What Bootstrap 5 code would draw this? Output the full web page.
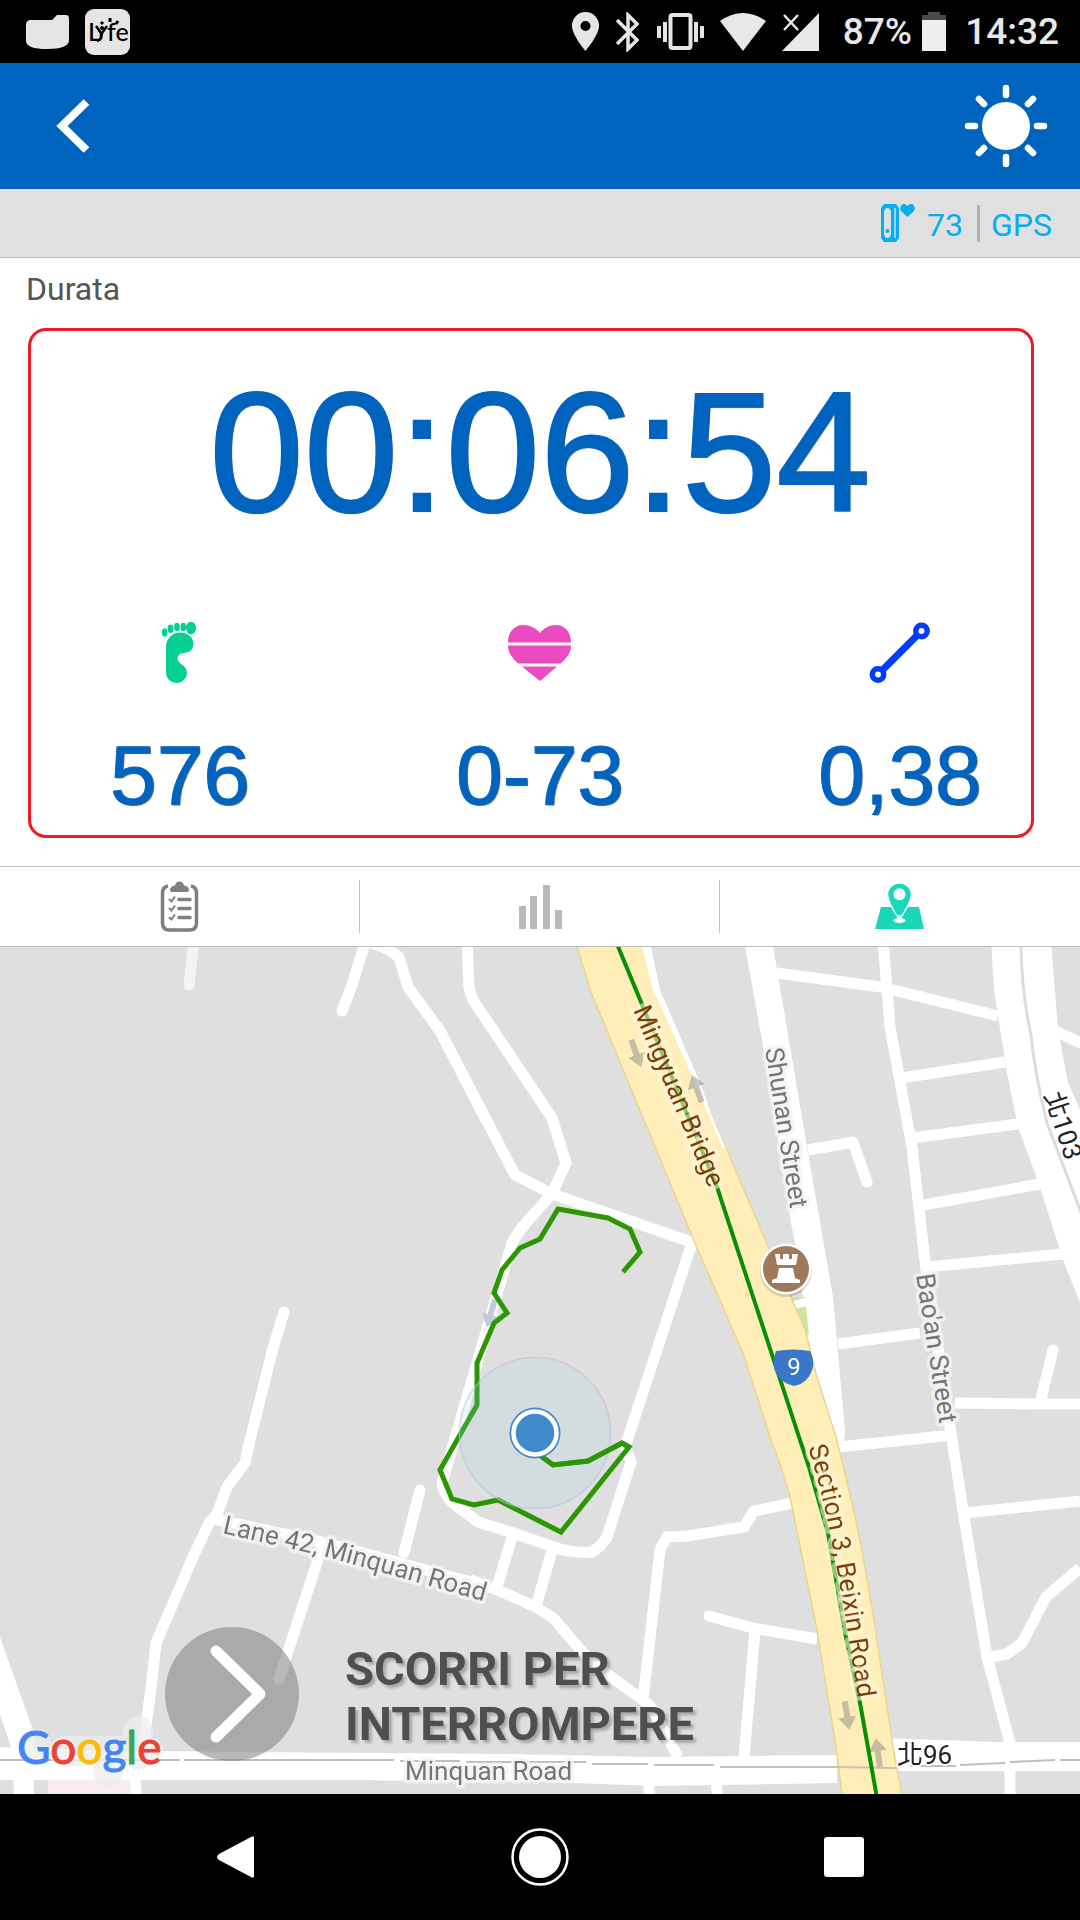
<!DOCTYPE html>
<html lang="it">
<head>
<meta charset="utf-8">
<meta name="viewport" content="width=device-width, initial-scale=1">
<title>Allenamento</title>
<link rel="stylesheet" href="https://cdn.jsdelivr.net/npm/bootstrap@5.3.0/dist/css/bootstrap.min.css">
<style>
  body { font-family: Roboto, "Noto Sans CJK TC", sans-serif; background: #fff; }
  svg { display: block; flex: none; }
  .status-bar { height: 63px; padding: 0 21px 0 26px; color: #e8e8e8; font-size: 37px; font-weight: 500; line-height: 65px; }
  .status-icons { gap: 16px; }
  .battery { margin: 0 19px 0 10px; }
  .app-bar { height: 126px; background: #0064bf; padding: 0 32px 0 44px; }
  .icon-btn { background: none; border: 0; padding: 0; color: inherit; }
  .sensor-bar { height: 69px; background: #e0e0e0; border-bottom: 1px solid #bdbdbd; padding: 0 28px; color: #03aef3; font-size: 32px; line-height: 36px; }
  .sensor-bar span { padding-top: 3px; }
  .sensor-bar svg { margin-right: 12px; }
  .sensor-bar .divider { width: 3px; height: 37px; background: #b2b2b2; margin: 0 11px 0 14px; }
  .metrics { padding: 13px 0 49px; }
  .metrics h1 { font-size: 32px; line-height: 36px; font-weight: 400; color: #555; padding-left: 26px; margin: 0 0 60px; }
  .reading { font-family: "Liberation Sans", Arial, sans-serif; color: #0064bf; text-shadow: 1px 1px 1px rgba(0,0,0,.6); text-align: center; margin: 0; }
  .clock-time { font-size: 170px; line-height: 170px; -webkit-text-stroke: 2px #0064bf; }
  .stat-value { font-size: 84px; line-height: 84px; margin-top: 45px; -webkit-text-stroke: 1px #0064bf; }
  .stats { margin-top: 79px; }
  .highlight-frame { inset: 70px 46px 28px 28px; border: 3px solid #ed1c24; border-radius: 18px; pointer-events: none; }
  .view-tabs { height: 81px; border-top: 1px solid #bdbdbd; border-bottom: 1px solid #bdbdbd; }
  .view-tabs a + a::before { content: ""; position: absolute; left: -1px; top: 13px; bottom: 13px; width: 1px; background: #c4c4c4; }
  .map-area { min-height: 600px; background: #dfdfdf; }
  .map-canvas { position: absolute; inset: 0; width: 100%; height: 100%; }
  .stop-slider { padding: 0 0 33px 165px; gap: 46px; }
  .stop-text { font-size: 47px; line-height: 55px; font-weight: 700; color: #4f4f4f; text-shadow: 3px 3px 3px rgba(0,0,0,.25); width: 400px; padding-top: 4px; }
  .nav-keys { height: 126px; gap: 184px; }
  .nav-keys button { width: 120px; }
  .lbl { font-family: Roboto, "Noto Sans CJK TC", sans-serif; font-size: 26px; fill: #757575; stroke: #f3f3f3; stroke-opacity: .85; stroke-width: 7; stroke-linejoin: round; paint-order: stroke; }
  .lbl-main { fill: #7c3c05; stroke: #fff6dc; stroke-opacity: .55; stroke-width: 9; }
  .lbl-num { fill: #222; stroke: #fff; stroke-width: 4; }
  .g-logo { font-family: Lato, sans-serif; font-size: 46px; stroke-width: 1; }
</style>
</head>
<body>
<div class="d-flex flex-column min-vh-100">

  <div class="status-bar bg-black d-flex align-items-center justify-content-between">
    <div class="d-flex align-items-center gap-3">
      <svg width="43" height="36" viewBox="0 0 43 36"><path fill="#e5e5e5" d="M5 6h21l5-5h9q3 0 3 4v21q0 9-22 9T0 26V11q0-5 5-5z"/></svg>
      <svg width="45" height="46" viewBox="0 0 45 46"><rect width="45" height="46" rx="9" fill="#e5e5e5"/><text x="3" y="32" font-family="Lato, sans-serif" font-size="25" fill="#000">L</text><text x="22" y="32" font-family="Lato, sans-serif" font-size="25" fill="#000">fe</text><circle cx="17" cy="19" r="2"/><path d="M11 17l5 7v3q0 4-4 5M22 17l-5 7-1 6" stroke="#000" stroke-width="2.500" fill="none"/><path d="M16 13l2 2M25 9v4M33 12l-2 3" stroke="#000" stroke-width="3" fill="none"/></svg>
    </div>
    <div class="d-flex align-items-center">
      <div class="d-flex align-items-center status-icons">
        <svg width="27" height="39" viewBox="0 0 27 39"><path fill="#e5e5e5" fill-rule="evenodd" d="M13.500 0A13.500 13.500 0 0 0 0 14c0 9 13.500 25 13.500 25S27 23 27 14A13.500 13.500 0 0 0 13.500 0zm0 9a5 5 0 1 1 0 10 5 5 0 0 1 0-10z"/></svg>
        <svg width="26" height="40" viewBox="0 0 26 40"><path d="M2 8l20 20-9 9V3l9 9L2 32" fill="none" stroke="#e5e5e5" stroke-width="3.500"/></svg>
        <svg width="47" height="38" viewBox="0 0 47 38"><rect x="13.500" y="2" width="20" height="33" rx="2" fill="none" stroke="#e5e5e5" stroke-width="4"/><path d="M2 13v12M8 9v20M39 9v20M45 13v12" stroke="#e5e5e5" stroke-width="4"/></svg>
        <svg width="46" height="38" viewBox="0 0 46 38"><path fill="#e8e8e8" d="M0 8Q23-8 46 8L23 38z"/></svg>
        <svg width="37" height="38" viewBox="0 0 37 38"><path fill="#e8e8e8" d="M37 0v38H0z"/><path d="M2 2l14 15M16 2L2 17" stroke="#e8e8e8" stroke-width="2.500"/></svg>
      </div>
      <span class="ms-4">87%</span>
      <svg class="battery" width="24" height="40" viewBox="0 0 24 40"><path fill="#4a4a4a" d="M0 3h6V0h12v3h6v5H0z"/><path fill="#eee" d="M0 8h24v31H0z"/></svg>
      <span>14:32</span>
    </div>
  </div>

  <header class="app-bar d-flex align-items-center justify-content-between text-white">
    <button class="icon-btn" type="button" aria-label="Indietro"><svg width="60" height="60" viewBox="0 0 60 60"><path d="M42.500 6L18 30l24.500 24" fill="none" stroke="#fff" stroke-width="8"/></svg></button>
    <button class="icon-btn" type="button" aria-label="Schermo sempre acceso"><svg width="84" height="84" viewBox="-42 -42 84 84"><circle r="24" fill="#fff"/><path d="M0-38v7M0 38v-7M-38 0h7M38 0h-7M-27-27l5 5M27-27l-5 5M-27 27l5-5M27 27l-5-5" stroke="#fff" stroke-width="6.500" stroke-linecap="round"/></svg></button>
  </header>

  <div class="sensor-bar d-flex align-items-center justify-content-end">
    <svg width="34" height="38" viewBox="0 0 34 38"><path fill="#03aef3" fill-rule="evenodd" d="M3 0h12l3 4v30l-3 4H3l-3-4V4zm3.500 4Q3 4 3 9v20q0 5 3.500 5T10 29V9q0-5-3.500-5z"/><path d="M14 4v30" stroke="#bfe6f5" stroke-width="1.500"/><circle cx="6.500" cy="27" r="2" fill="#03aef3"/><path fill="#03aef3" d="M26.500 13L20 7q-2-4 1-6.500 3-1.500 5.500 1.500Q29-1 32 .5q3 2.500 1 6.500z"/></svg>
    <span>73</span><span class="divider"></span><span>GPS</span>
  </div>

  <section class="metrics position-relative">
    <h1>Durata</h1>
    <p class="reading clock-time">00:06:54</p>
    <div class="row g-0 stats">
      <div class="col-4">
        <svg class="mx-auto" width="72" height="72" viewBox="144 616 72 72"><g fill="#04d094"><ellipse cx="191" cy="628" rx="5" ry="6.300"/><ellipse cx="183.300" cy="627" rx="2.800" ry="4.300"/><ellipse cx="177" cy="627" rx="2.900" ry="4.300"/><ellipse cx="170.500" cy="628.800" rx="2.900" ry="4.200"/><ellipse cx="164.700" cy="632.500" rx="2.800" ry="4.200"/><path d="M166 645c1-8 8-12.500 14-12.500 9 0 13.500 6 13.500 11 0 6-4 9.500-10 9.500-4 0-6 3-6 6 0 5 9.500 5.500 9.500 14 0 5-5 10-10 10-6 0-11-4-11-11z"/></g></svg>
        <p class="reading stat-value">576</p>
      </div>
      <div class="col-4">
        <svg class="mx-auto" width="72" height="72" viewBox="504 616 72 72"><path fill="#ec4bc0" d="M508 642.500c0-10 6-17.500 15-17.500 7 0 13 3 17 8 4-5 9-8 16-8 9 0 15 7.500 15 17.500zM508 645.500h63c0 7-4 12-10 18h-43c-6-6-10-11-10-18zM522 666.500h35L540 681z"/></svg>
        <p class="reading stat-value">0-73</p>
      </div>
      <div class="col-4">
        <svg class="mx-auto" width="72" height="72" viewBox="864 616 72 72"><g fill="none" stroke="#003cff" stroke-width="5.500"><circle cx="921.500" cy="631" r="5.700"/><circle cx="878" cy="674.500" r="5.700"/><path stroke-width="7" d="M882 670.500l35.500-35.500"/></g></svg>
        <p class="reading stat-value">0,38</p>
      </div>
    </div>
    <div class="highlight-frame position-absolute"></div>
  </section>

  <nav class="view-tabs row g-0">
    <a class="col-4 position-relative d-flex align-items-center justify-content-center" href="#riepilogo" aria-label="Riepilogo"><svg width="40" height="52" viewBox="160 881 40 52"><path fill="#7f7f7f" d="M170 890q0-4 5-4.500 1-4 4.500-4t4.500 4q5 .5 5 4.500 0 2-3 2h-13q-3 0-3-2z"/><path d="M168 886q-5.500 1-5.500 7v30q0 7 7 7h20q7 0 7-7v-30q0-6-5.500-7" fill="none" stroke="#7f7f7f" stroke-width="3.500"/><path d="M179 899.500h11M179 908.500h11M179 917.500h11" stroke="#7f7f7f" stroke-width="3.500" stroke-linecap="round"/><path d="M169 899l2.500 2.500 3.500-5M169 908l2.500 2.500 3.500-5M169 917l2.500 2.500 3.500-5" fill="none" stroke="#7f7f7f" stroke-width="2"/></svg></a>
    <a class="col-4 position-relative d-flex align-items-center justify-content-center" href="#grafici" aria-label="Grafici"><svg width="44" height="46" viewBox="0 0 44 46"><path fill="#bababa" d="M1 22h7v23H1zM12 12h7v33h-7zM25 1h7v44h-7zM37 26h7v19h-7z"/></svg></a>
    <a class="col-4 position-relative d-flex align-items-center justify-content-center" href="#mappa" aria-label="Mappa"><svg width="50" height="50" viewBox="875 882 50 50"><path fill="#18d8b9" d="M881 907h38l5 22h-49z"/><path fill="#18d8b9" stroke="#fff" stroke-width="1.500" fill-rule="evenodd" d="M899.500 883c-6.500 0-12 5-12 11.500 0 8 12 25 12 25s12-17 12-25c0-6.500-5.500-11.500-12-11.500zm0 6a5.300 5.300 0 1 1 0 10.600 5.300 5.300 0 0 1 0-10.600z"/><path d="M899.500 915v5" stroke="#fff" stroke-width="2"/><ellipse cx="899.500" cy="920.500" rx="6" ry="2.500" fill="#fff"/></svg></a>
  </nav>

  <main class="map-area position-relative flex-grow-1 overflow-hidden">
    <svg class="map-canvas" viewBox="0 947 1080 847" preserveAspectRatio="xMidYMid slice" role="img" aria-label="Mappa del percorso">
      <defs>
        <path id="p-lane" d="M222 1533L322 1556Q340 1560 500 1606"/>
        <path id="p-sec" d="M808 1448Q820 1482 832 1543T860 1712"/>
        <g id="arr"><path d="M-3-14h6V2h6L0 15-9 2h6z"/></g>
      </defs>
      <rect y="947" width="1080" height="847" fill="#dfdfdf"/>
      <path fill="#f9ecef" d="M48 1780h84v14H48z"/>
      <!-- local streets -->
      <path d="M194 940l-5 45" stroke="#f4f4f4" stroke-width="11" stroke-linecap="round"/>
      <g fill="none" stroke="#fff" stroke-width="11">
        <path stroke-linecap="round" d="M366 940l-14 45-10 26M366 941l22 8 11 8 9 30 32 44 46 89M284 1312l-11 36-23 92M420 1490l-16 63M321 1550l-42 129M709 1616l44 12M853 1142l14 40M1053 1350l-13 53"/>
        <path d="M440 1031l75 144 37 19 145 50M467 940l2 47q2 12 10 22l73 109 14 45-14 31-19 21q-12 12-21 28l-70 240q2 14 16 24t20 15l32 10 50 17q12 4 32 3 10-6 15-15l24-75-6-15 67-204"/>
        <path d="M250 1440l-5 23-18 24-11 30-6 4-17 36-37 86-4 37-7 53-2 35M209 1518l113 24M470 1580l23 8 43 19 18 12 38 44 48 35q10 6 14 14l24 45M512 1537l-15 50M553 1547l-16 56M322 1542l171 46"/>
        <path d="M792 1503l-38 8-10 16-56 9-21 1-7 13-17 150M753 1628l64 11M755 1630l-11 127"/>
        <path d="M777 973l104 14 117 29M883 940l7 87 22 120 14 123 25 163 13 84 23 140 23 86v60M901 1078l104-16M912 1138l106-14M918 1206l122-22M927 1267l136-13M838 1344l82-11M808 1150l46-8M955 1403l82 1h43M838 1447l115-12M965 1513l115-12M991 1657l16-3 15-11 24-46 34-29M1055 1031l28 13M649 1780v20M716 1780l2 20"/>
      </g>
      <!-- wide streets -->
      <g fill="#fff">
        <path d="M0 1637l34 96v61H14l-3-47L0 1715z"/>
        <path d="M0 1747l145 4 360 3 150 3 182-2v28l-180 3-110-4-200-2H0zM885 1738l110 4h85v29H885zM130 1776h10l2 18h-11z"/>
        <path d="M744 940l20 111 27 172 5 24 8 56 5 50 6 34 22 60q8-2 8-16l-12-134-26-150-35-207z"/>
        <path d="M991 940l3 50 13 83 11 54 22 60 23 73 20 50v-194l-15-33-10-53-7-90z"/>
      </g>
      <path d="M1021 940q0 50 10 95 4 40 16 88l35 92" fill="none" stroke="#dcdcdc" stroke-width="3"/>
      <path d="M0 1760h180M184 1760h210M400 1761h60M466 1762h120M592 1764h56M654 1765h60M720 1767h80M910 1766h46M960 1765l45-2M1010 1762l45-2M1060 1760h20" stroke="#bfbfbf" stroke-width="2"/>
      <!-- park strip -->
      <path fill="#cbe6a3" d="M788 1297h17l8 76-10-3z"/><path d="M790 1306l16-4M803 1340l12-2" stroke="#fff" stroke-width="8"/>
      <!-- highway -->
      <path fill="#fff" d="M630 947h21l9 43 39 90 28 75v20z"/>
      <path fill="#ffeeb8" stroke="#ead48e" stroke-width="1.500" d="M575 940l16 52 106 256 46 105 28 87q12 30 19 57l27 133 19 117 7 54h60l-10-54-19-127-12-70q-10-50-26-113l-20-63-11-45-41-92-37-87-37-82-36-80-12-48z"/>
      <path d="M642 940l12 48 36 80 34 80" fill="none" stroke="#fff" stroke-width="3"/>
      <path d="M800 1767h36l60 1" fill="none" stroke="#c8c3b4" stroke-width="2"/>
      <g fill="#8a8a8a" opacity=".5">
        <use href="#arr" transform="translate(636 1053) rotate(-20)"/>
        <use href="#arr" transform="translate(697 1089) rotate(160)"/>
        <use href="#arr" transform="translate(847 1715) rotate(-9)"/>
        <use href="#arr" transform="translate(878 1753) rotate(172)"/>
      </g>
      <use href="#arr" fill="#c6c9dc" transform="translate(491 1313) rotate(16)"/>
      <path d="M617 944l24 58 76 185 83 253 9 27 19 66 18 104 14 66 17 95" fill="none" stroke="#078f06" stroke-width="4"/>
      <!-- GPS track -->
      <path d="M623 1272l17-20-10-23-22-11-50-9-18 30-20 9-18 22-8 23 13 20-13 10-17 40v42l-37 65 12 29 22 6 24-5 63 32 68-85-7-4-34 18-35 4-12-9" fill="none" stroke="#2a9703" stroke-width="5"/>
      <circle cx="535" cy="1433" r="75.500" fill="#a0d2e1" fill-opacity=".18" stroke="#b9bfdc" stroke-opacity=".6" stroke-width="1.500"/>
      <path d="M629 1447l-7-4-34 18-35 4-12-9" fill="none" stroke="#2a9703" stroke-width="5"/>
      <circle cx="535" cy="1433" r="25.500" fill="#408acb"/><circle cx="535" cy="1433" r="21.500" fill="none" stroke="#fff" stroke-width="4.500"/>
      <!-- places -->
      <circle cx="786" cy="1271" r="26" fill="#000" opacity=".15"/><circle cx="786" cy="1269" r="25.500" fill="#fff"/><circle cx="786" cy="1269" r="23" fill="#a0785a"/>
      <path fill="#fff" d="M775 1254h5v5h3v-5h6v5h3v-5h6l-2 11h-19zM779 1268h14l2 10 5 2v3h-28v-3l5-2z"/>
      <path fill="#3a77c9" d="M776 1351q18-3 34 0 4 8 3 16-4 16-19 19-16-4-20-18-1-9 2-17z"/>
      <text x="794" y="1375" text-anchor="middle" font-family="Roboto, sans-serif" font-size="24" fill="#fff">9</text>
      <!-- labels -->
      <text class="lbl lbl-main" transform="translate(633 1010) rotate(67)">Mingyuan Bridge</text>
      <text class="lbl" transform="translate(765 1049) rotate(81)">Shunan Street</text>
      <text class="lbl" transform="translate(916 1275) rotate(81)">Bao'an Street</text>
      <text class="lbl lbl-main"><textPath href="#p-sec">Section 3, Beixin Road</textPath></text>
      <text class="lbl"><textPath href="#p-lane">Lane 42, Minquan Road</textPath></text>
      <text class="lbl" x="405" y="1780">Minquan Road</text>
      <text class="lbl lbl-num" x="897" y="1764">北96</text>
      <text class="lbl lbl-num" transform="translate(1044 1095) rotate(72)">北103</text>
      <path d="M36 1744v4M64 1751h84M108 1771v2M138 1731v24" fill="none" stroke="#ededed" stroke-width="30" stroke-linecap="round" stroke-linejoin="round" opacity=".7"/>
      <text class="g-logo" x="17" y="1764"><tspan fill="#4285f4" stroke="#4285f4">G</tspan><tspan fill="#ea4335" stroke="#ea4335">o</tspan><tspan fill="#fbbc05" stroke="#fbbc05">o</tspan><tspan fill="#4285f4" stroke="#4285f4">g</tspan><tspan fill="#34a853" stroke="#34a853">l</tspan><tspan fill="#ea4335" stroke="#ea4335">e</tspan></text>
    </svg>
    <div class="stop-slider position-absolute start-0 bottom-0 d-flex align-items-center">
      <button class="icon-btn" type="button" aria-label="Scorri per interrompere"><svg width="134" height="134" viewBox="165 1627 134 134"><circle cx="232" cy="1694" r="67" fill="#808080" fill-opacity=".56"/><path d="M216 1651l44 43-44 43" fill="none" stroke="#fff" stroke-width="11" stroke-linecap="round" stroke-linejoin="round"/></svg></button>
      <span class="stop-text">SCORRI PER INTERROMPERE</span>
    </div>
  </main>

  <footer class="nav-keys bg-black d-flex align-items-center justify-content-center">
    <button class="icon-btn d-flex justify-content-center" type="button" aria-label="Indietro"><svg width="40" height="44" viewBox="0 0 40 44"><path fill="#fff" d="M38 3v38q0 3-3 1L3 25q-4-3 0-6L35 2q3-2 3 1z"/></svg></button>
    <button class="icon-btn d-flex justify-content-center" type="button" aria-label="Home"><svg width="60" height="60" viewBox="-30 -30 60 60"><circle r="21" fill="#fff"/><circle r="27.500" fill="none" stroke="#fff" stroke-width="2.500"/></svg></button>
    <button class="icon-btn d-flex justify-content-center" type="button" aria-label="App recenti"><svg width="40" height="40" viewBox="0 0 40 40"><rect width="40" height="40" rx="3" fill="#fff"/></svg></button>
  </footer>
</div>
<script src="https://cdn.jsdelivr.net/npm/bootstrap@5.3.0/dist/js/bootstrap.bundle.min.js"></script>
</body>
</html>
